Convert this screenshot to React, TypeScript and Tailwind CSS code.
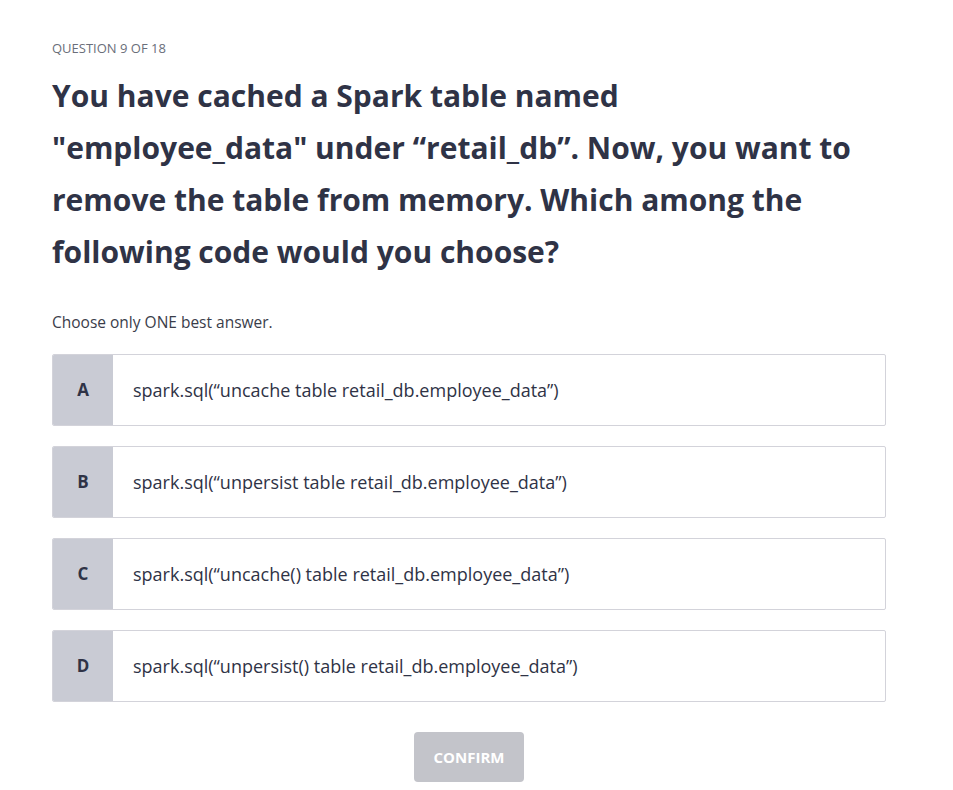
const options = [
  { key: "A", text: "spark.sql(\u201cuncache table retail_db.employee_data\u201d)" },
  { key: "B", text: "spark.sql(\u201cunpersist table retail_db.employee_data\u201d)" },
  { key: "C", text: "spark.sql(\u201cuncache() table retail_db.employee_data\u201d)" },
  { key: "D", text: "spark.sql(\u201cunpersist() table retail_db.employee_data\u201d)" },
];

export default function App() {
  return (
    <div className="min-h-[790px] w-full bg-white font-['Open_Sans',sans-serif]">
      <div className="w-[834px] pl-[52px] pt-[40px] box-content">
        <p className="text-[13px] leading-[16px] uppercase text-[#6a6e7a]">
          Question 9 of 18
        </p>
        <h1 className="mt-[14px] text-[30px] font-bold leading-[52px] text-[#2f3346]">
          <span className="block">You have cached a Spark table named</span>
          <span className="block">
            "employee_data" under {"\u201cretail_db\u201d"}. Now, you want to
          </span>
          <span className="block">remove the table from memory. Which among the</span>
          <span className="block">following code would you choose?</span>
        </h1>
        <p className="mt-[34px] text-[15.5px] leading-[20px] text-[#3a3d4a]">
          Choose only ONE best answer.
        </p>
        <div className="mt-[22px] flex flex-col gap-[20px]">
          {options.map((o) => (
            <div
              key={o.key}
              className="flex h-[72px] overflow-hidden rounded-[2px] border border-[#d3d3da] bg-white"
            >
              <div className="flex w-[60px] items-center justify-center bg-[#c9cbd4] text-[17px] font-bold text-[#2f3346]">
                {o.key}
              </div>
              <div className="flex items-center pl-[20px] text-[18px] text-[#2f3346]">
                {o.text}
              </div>
            </div>
          ))}
        </div>
        <div className="mt-[30px] flex justify-center">
          <button className="h-[50px] w-[110px] rounded-[4px] bg-[#c3c4ca] text-[15px] font-bold uppercase text-white">
            Confirm
          </button>
        </div>
      </div>
    </div>
  );
}
